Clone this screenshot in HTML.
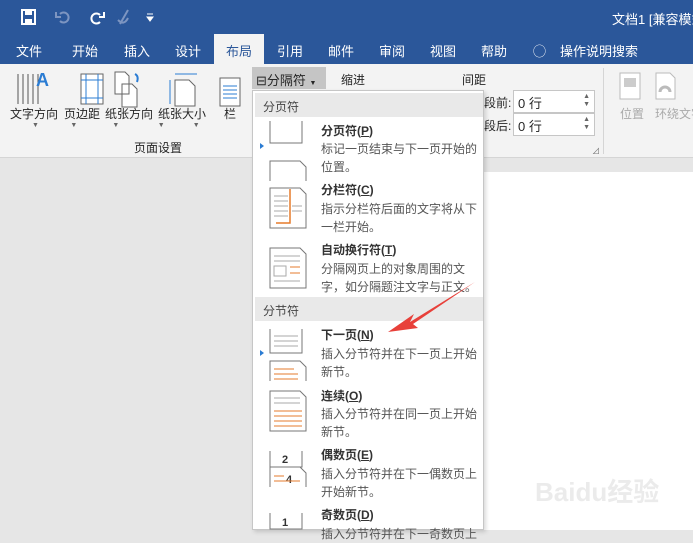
<!DOCTYPE html>
<html><head><meta charset="utf-8"><style>
*{margin:0;padding:0;box-sizing:border-box}
body{width:693px;height:530px;overflow:hidden;position:relative;background:#e6e6e6;font-family:"Liberation Sans","Noto Sans CJK SC",sans-serif;font-size:12px;color:#262626}
.a{position:absolute;white-space:nowrap}
.title{left:0;top:0;width:693px;height:34px;background:#2b579a}
.tabs{left:0;top:34px;width:693px;height:30px;background:#2b579a}
.tab{position:absolute;top:41px;color:#fff;font-size:13px}
.rib{left:0;top:64px;width:693px;height:94px;background:#f3f3f3;border-bottom:1px solid #d5d5d5}
.lbl{font-size:12px;color:#262626}
.menu{left:252px;top:90px;width:232px;height:440px;background:#fff;border:1px solid #c6c6c6;box-shadow:2px 2px 4px rgba(0,0,0,.15)}
.hdr{position:absolute;left:2px;width:228px;height:24px;background:#e9e9e9;color:#444;font-size:12px;padding:5px 0 0 8px}
.t{position:absolute;left:68px;font-size:12px;font-weight:bold;color:#333}
.d{position:absolute;left:68px;font-size:12px;color:#555;line-height:18px}
.spin{width:82px;height:23px;background:#fff;border:1px solid #c6c6c6;font-size:13px;padding:2px 4px}
</style></head><body>
<div class="a title"></div>
<svg class="a" style="left:20px;top:8px" width="140" height="18">
<rect x="2" y="2" width="13" height="14" fill="none" stroke="#fff" stroke-width="2"/><rect x="5" y="2" width="7" height="5" fill="#fff"/><rect x="5" y="11" width="7" height="5" fill="#fff"/>
<path d="M40 6 a5 5 0 1 1 0 7 M36 4 v5 h5" fill="none" stroke="#7d95c1" stroke-width="2"/>
<path d="M80 7 a5 5 0 1 0 0 7 M84 4 v5 h-5" fill="none" stroke="#fff" stroke-width="2"/>
<path d="M100 16 l8 -14 M98 12 q6 6 10 -2" fill="none" stroke="#7d95c1" stroke-width="2"/>
<path d="M127 6 h6 M127 9 l3 4 l3 -4z" fill="#fff" stroke="#fff"/>
</svg>
<div class="a" style="left:612px;top:9px;color:#fff;font-size:13px">文档1 [兼容模式</div>
<div class="a tabs"></div>
<div class="a" style="left:214px;top:34px;width:50px;height:30px;background:#f3f3f3"></div>
<div class="tab" style="left:16px">文件</div>
<div class="tab" style="left:72px">开始</div>
<div class="tab" style="left:124px">插入</div>
<div class="tab" style="left:175px">设计</div>
<div class="tab" style="left:226px;color:#2b579a">布局</div>
<div class="tab" style="left:277px">引用</div>
<div class="tab" style="left:328px">邮件</div>
<div class="tab" style="left:379px">审阅</div>
<div class="tab" style="left:430px">视图</div>
<div class="tab" style="left:481px">帮助</div>
<div class="tab" style="left:533px">&#9711;</div>
<div class="tab" style="left:560px">操作说明搜索</div>
<div class="a rib"></div>
<svg class="a" style="left:10px;top:68px" width="240" height="54">
<g stroke="#555" fill="none" stroke-width="1"><path d="M8 6v30M13 6v30M18 6v30M23 6v30M28 6v30"/></g>
<text x="26" y="18" font-size="18" font-weight="bold" fill="#2b7cd3" font-family="Liberation Sans">A</text>
<rect x="71" y="6" width="22" height="30" fill="#fff" stroke="#666"/><path d="M71 12h22M71 30h22M76 6v30M88 6v30" stroke="#2b7cd3"/>
<path d="M105 4h10l4 4v18h-14z M112 16h10l5 5v18h-15z" fill="#fff" stroke="#666"/><path d="M125 6q4 2 2 8" stroke="#2b7cd3" fill="none" stroke-width="2"/>
<path d="M165 12h14l6 6v20h-20z" fill="#fff" stroke="#666"/><path d="M165 6h22M160 12v24" stroke="#2b7cd3"/>
<rect x="210" y="10" width="20" height="28" fill="#fff" stroke="#666"/><path d="M213 18h14M213 22h14M213 26h14M213 30h14" stroke="#2b7cd3"/>
</svg>
<div class="a lbl" style="left:10px;top:105px">文字方向</div>
<div class="a lbl" style="left:64px;top:105px">页边距</div>
<div class="a lbl" style="left:105px;top:105px">纸张方向</div>
<div class="a lbl" style="left:158px;top:105px">纸张大小</div>
<div class="a lbl" style="left:224px;top:105px">栏</div>
<div class="a" style="left:32px;top:122px;font-size:7px;color:#666">▼&#8195;&#8195;&#8195;&#8195;&#8194;▼&#8195;&#8195;&#8195;&#8195;&#8195;▼&#8195;&#8195;&#8195;&#8195;&#8195;&#8194;▼&#8195;&#8195;&#8195;&#8195;▼</div>
<div class="a lbl" style="left:134px;top:139px">页面设置</div>
<div class="a" style="left:252px;top:67px;width:74px;height:22px;background:#c5c5c5"></div>
<div class="a" style="left:256px;top:70px;font-size:13px">⊟分隔符 <span style="font-size:7px">▼</span></div>
<div class="a lbl" style="left:341px;top:71px">缩进</div>
<div class="a lbl" style="left:462px;top:71px">间距</div>
<div class="a lbl" style="left:484px;top:94px">段前:</div>
<div class="a lbl" style="left:484px;top:117px">段后:</div>
<div class="a spin" style="left:513px;top:90px">0 行<span style="float:right;font-size:7px;color:#666;line-height:8px">▲<br>▼</span></div>
<div class="a spin" style="left:513px;top:113px">0 行<span style="float:right;font-size:7px;color:#666;line-height:8px">▲<br>▼</span></div>
<div class="a" style="left:592px;top:146px;font-size:8px;color:#777">⊿</div>
<div class="a" style="left:603px;top:68px;width:1px;height:86px;background:#d5d5d5"></div>
<svg class="a" style="left:618px;top:72px" width="80" height="30"><rect x="2" y="1" width="20" height="26" fill="#fff" stroke="#bbb"/><rect x="6" y="6" width="12" height="9" fill="#ccc"/><path d="M38 1h14l5 5v21h-19z" fill="#fff" stroke="#bbb"/><path d="M42 20a5 5 0 0 1 10 0" stroke="#bbb" fill="none" stroke-width="3"/></svg>
<div class="a lbl" style="left:620px;top:105px;color:#aaa">位置</div>
<div class="a lbl" style="left:655px;top:105px;color:#aaa">环绕文字</div>
<div class="a" style="left:484px;top:172px;width:209px;height:358px;background:#fff"></div>
<div class="a menu">
<div class="hdr" style="top:2px">分页符</div>
<div class="hdr" style="top:206px">分节符</div>
<svg class="a" style="left:5px;top:30px" width="60" height="410" fill="none" stroke="#777">
<path d="M12 0v22h32v-22M12 60v-20h30l6 6v14"/><path d="M2 22l4 3-4 3z" fill="#2b7cd3" stroke="none"/>
<path d="M12 67h30l6 6v34h-36z" fill="#fff"/><path d="M16 75h14M16 80h14M16 85h14M16 90h14M16 95h14M34 85h10M34 90h10" stroke="#aaa"/><path d="M32 68v34h-14" stroke="#e57b2c" stroke-width="1.5"/>
<path d="M12 127h30l6 6v34h-36z" fill="#fff"/><path d="M16 135h26M16 140h26M16 160h26" stroke="#aaa"/><rect x="16" y="145" width="12" height="10" stroke="#aaa"/><path d="M32 146h10M32 152h10" stroke="#e57b2c"/>
<path d="M12 208v24h32v-24"/><path d="M16 215h24M16 220h24M16 225h24" stroke="#aaa"/><path d="M2 229l4 3-4 3z" fill="#2b7cd3" stroke="none"/>
<path d="M12 260v-20h30l6 6v14" /><path d="M16 248h20M16 253h24M16 258h24" stroke="#e57b2c"/>
<path d="M12 270h30l6 6v34h-36z" fill="#fff"/><path d="M16 277h26M16 282h26" stroke="#aaa"/><path d="M16 290h28M16 295h28M16 300h28M16 305h28" stroke="#e57b2c"/>
<path d="M12 330v16h32v-16M12 366v-20h30l6 6v14M12 392v16h32v-16"/>
<text x="24" y="342" font-size="11" fill="#333" stroke="none" font-weight="bold">2</text><text x="28" y="362" font-size="11" fill="#333" stroke="none" font-weight="bold">4</text><text x="24" y="405" font-size="11" fill="#333" stroke="none" font-weight="bold">1</text>
<path d="M16 355h10M16 360h26" stroke="#e57b2c"/>
</svg>
<div class="t" style="top:31px">分页符(<u>P</u>)</div>
<div class="d" style="top:49px">标记一页结束与下一页开始的<br>位置。</div>
<div class="t" style="top:90px">分栏符(<u>C</u>)</div>
<div class="d" style="top:109px">指示分栏符后面的文字将从下<br>一栏开始。</div>
<div class="t" style="top:150px">自动换行符(<u>T</u>)</div>
<div class="d" style="top:169px">分隔网页上的对象周围的文<br>字，如分隔题注文字与正文。</div>
<div class="t" style="top:235px">下一页(<u>N</u>)</div>
<div class="d" style="top:254px">插入分节符并在下一页上开始<br>新节。</div>
<div class="t" style="top:296px">连续(<u>O</u>)</div>
<div class="d" style="top:314px">插入分节符并在同一页上开始<br>新节。</div>
<div class="t" style="top:355px">偶数页(<u>E</u>)</div>
<div class="d" style="top:374px">插入分节符并在下一偶数页上<br>开始新节。</div>
<div class="t" style="top:415px">奇数页(<u>D</u>)</div>
<div class="d" style="top:434px">插入分节符并在下一奇数页上</div>
</div>
<svg class="a" style="left:380px;top:280px" width="100" height="60"><path d="M95 2 L30 42 L34 34 L8 52 L38 48 L33 44 Z" fill="#e8403a"/></svg>
<div class="a" style="left:535px;top:472px;font-size:26px;color:rgba(215,215,215,.5);font-weight:bold">Baidu经验</div>
</body></html>
